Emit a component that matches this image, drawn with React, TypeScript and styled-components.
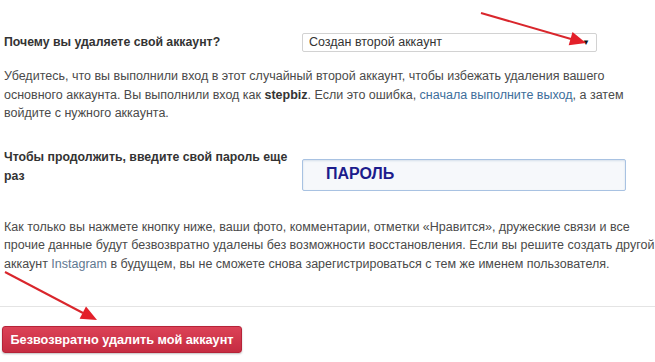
import styled, { createGlobalStyle } from "styled-components"

const GlobalStyle = createGlobalStyle`
	html, body {
		margin: 0;
		padding: 0;
		background: #ffffff;
	}
	body {
		font-family: "Liberation Sans", Arial, sans-serif;
	}
`

const Page = styled.div`
	position: relative;
	width: 655px;
	height: 362px;
	padding: 33px 0 0 4px;
	box-sizing: border-box;
	overflow: hidden;
	color: #4a4a4a;
	font-size: 12.5px;
	line-height: 18.5px;
`

const FieldRow = styled.div<{ $top: number }>`
	display: grid;
	grid-template-columns: 298px auto;
	align-items: ${(p) => (p.$top ? "start" : "center")};
	margin-top: ${(p) => p.$top}px;
`

const Label = styled.div`
	font-size: 12.3px;
	font-weight: bold;
	color: #333333;
	line-height: 19px;
`

const Select = styled.div`
	display: flex;
	align-items: center;
	justify-content: space-between;
	width: 295px;
	height: 19px;
	box-sizing: border-box;
	padding: 0 6px 0 6px;
	border: 1px solid #d2d2d2;
	border-radius: 2px;
	background: #fff;
	color: #333;
	font-size: 12.5px;
`

const Caret = styled.span`
	font-size: 8px;
	color: #111;
	margin-top: 2px;
`

const PasswordBox = styled.div`
	display: flex;
	align-items: center;
	width: 324px;
	height: 32px;
	margin-top: 11px;
	box-sizing: border-box;
	padding-left: 23px;
	border: 1px solid #a8c2e2;
	border-radius: 2px;
	background: #f6f8fb;
	box-shadow: inset 0 1px 2px rgba(120, 150, 190, 0.25);
	color: #1c1c8c;
	font-size: 16px;
	font-weight: bold;
`

const Paragraph = styled.p<{ $top: number }>`
	margin: ${(p) => p.$top}px 0 0;
	white-space: nowrap;
`

const Bold = styled.b`
	color: #333;
`

const Link = styled.a<{ $muted?: boolean }>`
	color: ${(p) => (p.$muted ? "#5f7891" : "#3d6e9b")};
	text-decoration: none;
`

const Divider = styled.div`
	margin: 33px 0 0 -4px;
	width: 655px;
	border-top: 1px solid #e4e4e4;
`

const DeleteButton = styled.button`
	display: block;
	margin: 19px 0 0 -2px;
	width: 240px;
	height: 27px;
	padding: 0;
	border: 1px solid #b52338;
	border-radius: 3px;
	background: linear-gradient(#dc4257, #c52c41);
	box-shadow: 0 1px 2px rgba(0, 0, 0, 0.25);
	color: #ffffff;
	font-family: "Liberation Sans", Arial, sans-serif;
	font-size: 12.7px;
	font-weight: bold;
	text-align: center;
`

const Annotations = styled.svg`
	position: absolute;
	left: 0;
	top: 0;
	width: 655px;
	height: 362px;
	pointer-events: none;
`

const App = () => {
	return (
		<Page>
			<GlobalStyle />
			<FieldRow $top={0}>
				<Label>Почему вы удаляете свой аккаунт?</Label>
				<Select>
					<span>Создан второй аккаунт</span>
					<Caret>▼</Caret>
				</Select>
			</FieldRow>
			<Paragraph $top={15}>
				Убедитесь, что вы выполнили вход в этот случайный второй аккаунт, чтобы избежать удаления вашего
				<br />
				основного аккаунта. Вы выполнили вход как <Bold>stepbiz</Bold>. Если это ошибка,{" "}
				<Link href="#">сначала выполните выход</Link>, а затем
				<br />
				войдите с нужного аккаунта.
			</Paragraph>
			<FieldRow $top={25}>
				<Label>Чтобы продолжить, введите свой пароль еще раз</Label>
				<PasswordBox>ПАРОЛЬ</PasswordBox>
			</FieldRow>
			<Paragraph $top={27}>
				Как только вы нажмете кнопку ниже, ваши фото, комментарии, отметки «Нравится», дружеские связи и все
				<br />
				прочие данные будут безвозвратно удалены без возможности восстановления. Если вы решите создать другой
				<br />
				аккаунт <Link href="#" $muted>Instagram</Link> в будущем, вы не сможете снова зарегистрироваться с тем же именем пользователя.
			</Paragraph>
			<Divider />
			<DeleteButton>Безвозвратно удалить мой аккаунт</DeleteButton>
			<Annotations viewBox="0 0 655 362">
				<line x1="481" y1="13" x2="571" y2="39" stroke="#d9262c" strokeWidth="2" />
				<polygon points="586,43 568.7,45.3 572.5,31.9" fill="#e3202a" />
				<line x1="5" y1="272" x2="83" y2="313" stroke="#d9262c" strokeWidth="2" />
				<polygon points="97,320 79.6,318.8 86,306.4" fill="#e3202a" />
			</Annotations>
		</Page>
	)
}

export default App
